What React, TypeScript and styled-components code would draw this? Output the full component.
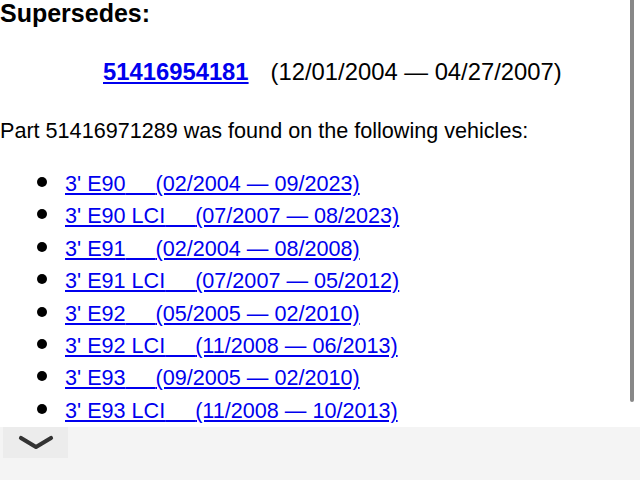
import styled, { createGlobalStyle } from 'styled-components'

const GlobalStyle = createGlobalStyle`
  html, body {
    margin: 0;
    padding: 0;
    background: #fff;
  }
  body {
    font-family: "Liberation Sans", Arial, Helvetica, sans-serif;
    font-size: 21.6px;
    color: #000;
    overflow: hidden;
  }
`

const Page = styled.div`
  height: 480px;
  overflow: hidden;
`

const Heading = styled.h3`
  margin: 0;
  font-size: 25px;
  font-weight: bold;
  line-height: 26px;
`

const SupersedeRow = styled.div`
  display: flex;
  align-items: baseline;
  gap: 22px;
  padding-left: 103px;
  margin-top: 32px;
  font-size: 23.8px;
  line-height: 28px;
`

const PartLink = styled.a`
  color: #0000ee;
  font-weight: bold;
  text-decoration: underline;
`

const Intro = styled.p`
  margin: 31px 0 0;
  line-height: 28px;
`

const VehicleList = styled.ul`
  margin: 23px 0 0;
  padding-left: 65px;
  line-height: 32.4px;
  list-style: none;
`

const VehicleItem = styled.li`
  &::before {
    content: '';
    display: inline-block;
    width: 10px;
    height: 10px;
    border-radius: 50%;
    background: #000;
    margin-left: -28px;
    margin-right: 18px;
    vertical-align: 4px;
  }
`

const VehicleLink = styled.a`
  color: #0000ee;
  text-decoration: underline;
  text-underline-offset: 2px;
`

const BottomBar = styled.div`
  position: fixed;
  left: 0;
  right: 0;
  bottom: 0;
  height: 53px;
  background: #f4f4f4;
`

const ToggleButton = styled.button`
  margin: 0 0 0 3px;
  width: 65px;
  height: 31px;
  border: none;
  padding: 0;
  background: #ececec;
  display: flex;
  align-items: center;
  justify-content: center;
  cursor: pointer;
`

const ScrollIndicator = styled.div`
  position: fixed;
  top: 0;
  right: 6px;
  width: 4px;
  height: 402px;
  background: #888;
  border-radius: 0 0 2px 2px;
`

const vehicles = [
  { name: "3' E90", range: '(02/2004 — 09/2023)' },
  { name: "3' E90 LCI", range: '(07/2007 — 08/2023)' },
  { name: "3' E91", range: '(02/2004 — 08/2008)' },
  { name: "3' E91 LCI", range: '(07/2007 — 05/2012)' },
  { name: "3' E92", range: '(05/2005 — 02/2010)' },
  { name: "3' E92 LCI", range: '(11/2008 — 06/2013)' },
  { name: "3' E93", range: '(09/2005 — 02/2010)' },
  { name: "3' E93 LCI", range: '(11/2008 — 10/2013)' },
]

const gap = '\u00a0'.repeat(5)

const App = () => {
  return (
    <Page>
      <GlobalStyle />
      <Heading>Supersedes:</Heading>

      <SupersedeRow>
        <PartLink href="#">51416954181</PartLink>
        <span>(12/01/2004 — 04/27/2007)</span>
      </SupersedeRow>

      <Intro>Part 51416971289 was found on the following vehicles:</Intro>

      <VehicleList>
        {vehicles.map((v) => (
          <VehicleItem key={v.name}>
            <VehicleLink href="#">
              {v.name}
              {gap}
              {v.range}
            </VehicleLink>
          </VehicleItem>
        ))}
      </VehicleList>

      <ScrollIndicator />

      <BottomBar>
        <ToggleButton aria-label="Expand">
          <svg width="36" height="16" viewBox="0 0 36 16">
            <path d="M3 3 L18 12 L33 3" fill="none" stroke="#333" strokeWidth="4.2" strokeLinecap="round" strokeLinejoin="round" />
          </svg>
        </ToggleButton>
      </BottomBar>
    </Page>
  )
}

export default App
